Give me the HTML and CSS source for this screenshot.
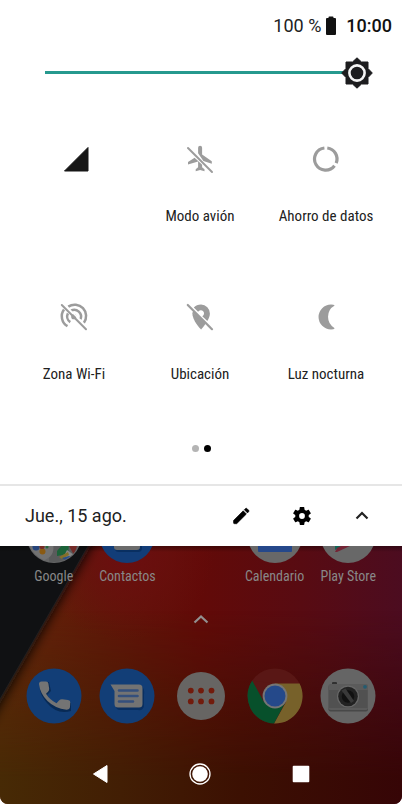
FILE: index.html
```html
<!DOCTYPE html>
<html lang="es">
<head>
<meta charset="utf-8">
<meta name="viewport" content="width=device-width, initial-scale=1">
<title>Ajustes rápidos</title>
<link rel="stylesheet" href="styles.css">
</head>
<body>
<div class="phone">
  <section class="panel">
    <header class="status">
      <span>100 %</span>
      <svg class="battery" viewBox="0 0 12 20" width="12" height="20" aria-hidden="true"><path fill="#111" d="M3.500 2V1.300Q3.500.5 4.300.5H7.700Q8.500.5 8.500 1.300V2H10Q11 2 11 3V18Q11 19 10 19H2Q1 19 1 18V3Q1 2 2 2Z"/></svg>
      <time class="clock">10:00</time>
    </header>

    <div class="brightness">
      <input class="slider" type="range" min="0" max="100" value="100" aria-label="Brillo">
      <svg class="sun" viewBox="0 0 32 32" width="32" height="32" aria-hidden="true">
        <path fill="#1d1d1f" stroke="#1d1d1f" stroke-width="1" stroke-linejoin="round" d="M16 .8 20.500 5H27V11.500L31.300 16 27 20.500V27H20.500L16 31.200 11.500 27H5V20.500L.7 16 5 11.500V5H11.500Z"/>
        <circle cx="16" cy="16" r="7.600" fill="#1d1d1f" stroke="#f5f5f5" stroke-width="2.600"/>
      </svg>
    </div>

    <div class="tiles">
      <button class="tile" aria-label="Datos móviles">
        <svg viewBox="0 0 30 30" width="30" height="30"><path fill="#161616" stroke="#161616" stroke-linejoin="round" d="M29 3.500V27H5.500Z"/></svg>
        <span></span>
      </button>
      <button class="tile off">
        <svg viewBox="0 0 30 30" width="30" height="30"><path fill="currentColor" d="M13.100 9.200V3.700A2 2 0 0 1 17.100 3.700V10.500L26.800 17.300V19.800L18.400 17Z"/><path fill="currentColor" d="M9.600 13.700 3 18V20.400L13.100 17.600V23.300L10.700 25.200V27.200L15.100 26 19.500 27.200V25.200L17.100 23.300V20.700Z"/><path fill="none" stroke="currentColor" stroke-width="2" stroke-linecap="round" d="M3 4 27 28"/></svg>
        <span>Modo avión</span>
      </button>
      <button class="tile off">
        <svg viewBox="0 0 30 30" width="30" height="30"><g fill="none" stroke="currentColor" stroke-width="3.200"><path d="M16.300 4A11.100 11.100 0 0 1 25.200 19.200"/><path d="M23.500 21.700A11.100 11.100 0 1 1 13.400 4"/></g></svg>
        <span>Ahorro de datos</span>
      </button>
      <button class="tile off">
        <svg viewBox="0 0 30 30" width="30" height="30"><g fill="none" stroke="currentColor" stroke-width="2.500"><path d="M9.300 4.600A11.400 11.400 0 0 1 24.800 20.900"/><path d="M5 7.600A11.400 11.400 0 0 0 8.500 24.200"/><path d="M12 8.700A6.800 6.800 0 0 1 21.500 17.300"/><path d="M8.900 11.400A6.800 6.800 0 0 0 11.300 20.100"/></g><circle cx="14.800" cy="14.700" r="2.600" fill="currentColor"/><path d="M4.500 1.500 29 26" stroke="#fff" stroke-width="1.400"/><path d="M2.800 3 27 27.200" stroke="currentColor" stroke-width="2" stroke-linecap="round"/></svg>
        <span>Zona Wi-Fi</span>
      </button>
      <button class="tile off">
        <svg viewBox="0 0 30 30" width="30" height="30"><path fill="currentColor" fill-rule="evenodd" d="M8.800 5.500C10.500 3.500 13.200 2.500 16 2.500A8.900 8.900 0 0 1 24.900 11.500C24.900 14 23.800 16.500 22.300 19L17.300 14.200A3.200 3.200 0 1 0 13.100 9.700Z"/><path fill="currentColor" d="M7.300 10.500 20.800 21.400C18.300 25 16 27.500 16 27.500S7 18.500 7.300 10.500Z"/><path fill="currentColor" d="M8.300 8.500 21.500 20.800 18 21 7.500 11Z"/><path d="M2.800 3 27 27.200" stroke="currentColor" stroke-width="2.200" stroke-linecap="round"/></svg>
        <span>Ubicación</span>
      </button>
      <button class="tile off">
        <svg viewBox="0 0 30 30" width="30" height="30"><path fill="currentColor" d="M20 2.500Q23 2.500 23.700 3.500A13 13 0 0 0 23.700 26.200Q23 27.400 20 27.400A12.450 12.450 0 0 1 20 2.500Z"/></svg>
        <span>Luz nocturna</span>
      </button>
    </div>

    <div class="dots"><i class="dot"></i><i class="dot current"></i></div>

    <footer class="bar">
      <span class="date">Jue., 15 ago.</span>
      <button class="action" aria-label="Editar"><svg viewBox="0 0 20 20" width="20" height="20"><path d="M1.500 14.500 11.200 4.800 14.400 8 4.700 17.700H2.500Q1.500 17.700 1.500 16.700Z M12.300 3.700 13.500 2.500Q14.200 1.900 14.900 2.500L16.700 4.300Q17.300 5 16.700 5.700L15.500 6.900Z" stroke="#000" stroke-width=".6" stroke-linejoin="round"/></svg></button>
      <button class="action" aria-label="Ajustes"><svg viewBox="2 2 20 20" width="18" height="18"><path d="M19.430 12.980c.04-.32.07-.64.07-.98s-.03-.66-.07-.98l2.110-1.650c.19-.15.24-.42.12-.64l-2-3.460c-.12-.22-.39-.3-.61-.22l-2.490 1c-.52-.4-1.080-.73-1.690-.98l-.38-2.650C14.460 2.180 14.250 2 14 2h-4c-.25 0-.46.18-.49.42l-.38 2.650c-.61.25-1.170.59-1.690.98l-2.490-1c-.23-.09-.49 0-.61.22l-2 3.460c-.13.22-.07.49.12.64l2.110 1.650c-.04.32-.07.65-.07.98s.03.66.07.98l-2.110 1.650c-.19.15-.24.42-.12.64l2 3.460c.12.22.39.3.61.22l2.490-1c.52.4 1.080.73 1.690.98l.38 2.650c.03.24.24.42.49.42h4c.25 0 .46-.18.49-.42l.38-2.650c.61-.25 1.170-.59 1.690-.98l2.490 1c.23.09.49 0 .61-.22l2-3.460c.12-.22.07-.49-.12-.64l-2.110-1.650zM12 15.200a3.200 3.200 0 1 1 0-6.400 3.200 3.200 0 0 1 0 6.400z"/></svg></button>
      <button class="action" aria-label="Contraer"><svg viewBox="0 0 18 18" width="18" height="18"><path fill="none" stroke="#222" stroke-width="2.200" d="M3.500 11.500 9 6 14.500 11.500"/></svg></button>
    </footer>
  </section>

  <main class="home">
    <svg class="wallpaper" viewBox="0 0 402 258" preserveAspectRatio="none" aria-hidden="true">
      <defs>
        <linearGradient id="base" x1="0" y1="0" x2="1" y2="0"><stop offset="0" stop-color="#64260a"/><stop offset=".25" stop-color="#601808"/><stop offset=".5" stop-color="#620a08"/><stop offset=".75" stop-color="#580b12"/><stop offset="1" stop-color="#4c0c20"/></linearGradient>
        <linearGradient id="low" x1="0" y1="0" x2="1" y2="0"><stop offset="0" stop-color="#472a05"/><stop offset=".3" stop-color="#421e04"/><stop offset=".6" stop-color="#3c1002"/><stop offset="1" stop-color="#360506"/></linearGradient>
        <linearGradient id="fade" x1="0" y1="0" x2="0" y2="1"><stop offset=".25" stop-color="#fff" stop-opacity="0"/><stop offset=".9" stop-color="#fff"/></linearGradient>
        <linearGradient id="shade" x1="0" y1="0" x2="0" y2="1"><stop offset="0" stop-opacity=".35"/><stop offset="1" stop-opacity="0"/></linearGradient>
        <radialGradient id="red" cx="125" cy="5" r="90" gradientUnits="userSpaceOnUse"><stop offset="0" stop-color="#6c0e10"/><stop offset="1" stop-color="#6c0e10" stop-opacity="0"/></radialGradient>
        <mask id="down"><rect width="402" height="258" fill="url(#fade)"/></mask>
        <filter id="soft" x="-30%" y="-30%" width="160%" height="160%"><feGaussianBlur stdDeviation="6"/></filter>
      </defs>
      <rect width="402" height="258" fill="url(#base)"/>
      <rect width="402" height="258" fill="url(#red)"/>
      <rect width="402" height="258" fill="url(#low)" mask="url(#down)"/>
      <path d="M-30-40H114L-30 210Z" fill="#0b0b0d" filter="url(#soft)"/>
      <path d="M0 0H88L0 153Z" fill="#101113"/>
      <path d="M88 0 0 153" stroke="#25272b" stroke-width=".6"/>
      <rect width="402" height="6" fill="url(#shade)"/>
    </svg>

    <div class="apps">
      <a class="app" href="#"><svg viewBox="0 38 56 17" width="56" height="17">
        <defs><clipPath id="disc"><circle cx="28" cy="27.500" r="26.500"/></clipPath></defs>
        <circle cx="28" cy="27.500" r="27.500" fill="#656667"/>
        <g clip-path="url(#disc)"><path fill="#666" d="M0 38H27V55H0Z"/><path fill="#5a5b5c" d="M23 38H56V55H23Z"/><circle cx="15" cy="40" r="12.500" fill="#727272"/><circle cx="10" cy="39" r="3.500" fill="#26447a"/><circle cx="16.500" cy="43.500" r="3" fill="#8a5a12"/><circle cx="16" cy="38.500" r="2.600" fill="#762c25"/><circle cx="21" cy="39" r="1.500" fill="#25643c"/><path fill="#1c6339" d="M31 48V43L37 36H43L42 46Z"/><path fill="#858585" d="m41 42 7 5-6 4-5-1Z"/><path fill="#856f28" d="m33 49 9-5 1 3-7 4Z"/><path fill="#742a27" d="M43 38H51L48 47Z"/><path fill="#274d8a" d="m36 50 7-2 3 1-5 4Z"/></g></svg><span>Google</span></a>
      <a class="app" href="#"><svg viewBox="0 38 56 17" width="56" height="17"><circle cx="28" cy="27.500" r="27.500" fill="#123d78"/><path fill="#092f61" d="M16 38H43V40Q43 44 39 44H20Q16 44 16 41Z"/><path fill="#6b6b6b" d="M15 38H41V39Q41 42 38 42H18Q15 42 15 39Z"/></svg><span>Contactos</span></a>
      <span></span>
      <a class="app" href="#"><svg viewBox="0 38 56 17" width="56" height="17"><circle cx="28" cy="27.500" r="27.500" fill="#686868"/><path fill="#25488a" d="M11 38H45V43Q45 44 44 44H12Q11 44 11 43Z"/></svg><span>Calendario</span></a>
      <a class="app" href="#"><svg viewBox="0 38 56 17" width="56" height="17"><circle cx="28" cy="27.500" r="27.500" fill="#686868"/><path fill="#126457" d="M15 38H22L15 42Z"/><path fill="#742435" d="M15 44 17 40 21 38H30L17 44Z"/></svg><span>Play Store</span></a>
    </div>

    <button class="drawer" aria-label="Abrir aplicaciones"><svg viewBox="0 0 16 10" width="16" height="10"><path fill="none" stroke="#929090" stroke-width="2.200" d="M1.500 8.500 8 2.500 14.500 8.500"/></svg></button>

    <div class="dock">
      <a class="app" href="#" aria-label="Teléfono"><svg viewBox="0 0 56 56" width="56" height="56"><circle cx="28" cy="28" r="27.500" fill="#123e77"/><path fill="#082a55" d="M15 16 23 14 25 23 21 27Q25 34 31 37L36 33 45 35V43Q31 47 21 35T15 16Z"/><path fill="#747474" d="M13 16Q13 13.500 15.500 13.500H20Q22 13.500 22.400 15.500L23.200 21Q23.200 22.600 22 23.700L20 25.700Q24 32 30.500 35.200L33 32.500Q34.500 31 36.300 31.200L42 32Q44.500 32.400 44.300 34.500L44 39Q43.600 41.700 40.500 41.700 29 40.500 21.500 33T13 16Z"/></svg></a>
      <a class="app" href="#" aria-label="Mensajes"><svg viewBox="0 0 56 56" width="56" height="56"><circle cx="28" cy="28" r="27.500" fill="#123e77"/><path fill="#092f61" d="M14 18H42Q46 20 45 27V38Q44 43 39 42H20Q16 41 17 36V23Z"/><path fill="#737373" d="M11.500 16.500H40Q43.500 16.500 43.500 20V36Q43.500 39.500 40 39.500H19Q15.500 39.500 15.500 36V23Z"/><path fill="none" stroke="#344f7c" stroke-width="2.600" stroke-linecap="round" d="M20 22.500H38.500M20 28H38.500M20 33.500H34"/></svg></a>
      <a class="app" href="#" aria-label="Aplicaciones"><svg viewBox="0 0 56 56" width="56" height="56"><circle cx="28" cy="28" r="24" fill="#676563"/><g fill="#721b0c"><circle cx="17.800" cy="22.600" r="2.900"/><circle cx="28" cy="22.600" r="2.900"/><circle cx="38.500" cy="22.600" r="2.900"/><circle cx="17.800" cy="33.400" r="2.900"/><circle cx="28" cy="33.400" r="2.900"/><circle cx="38.500" cy="33.400" r="2.900"/></g></svg></a>
      <a class="app" href="#" aria-label="Chrome"><svg viewBox="0 0 56 56" width="56" height="56"><circle cx="28" cy="28" r="27.500" fill="#591715"/><path fill="#77612a" d="M28 15.600H52.600A27.500 27.500 0 0 1 27 55.500L39 34Z"/><path fill="#07502b" d="M5.300 12.500A27.500 27.500 0 0 0 27 55.500L38 35 17 34Z"/><path fill="#591715" d="M5.300 12.500 17.300 34 28 28V15.600Z"/><circle cx="28" cy="28" r="12.400" fill="#757575"/><circle cx="28" cy="28" r="10.500" fill="#25498a"/></svg></a>
      <a class="app" href="#" aria-label="Cámara"><svg viewBox="0 0 56 56" width="56" height="56"><circle cx="28" cy="28" r="27.500" fill="#656565"/><rect x="12" y="14" width="5" height="3" rx="1" fill="#303030"/><rect x="8.500" y="17" width="39.500" height="26.500" rx="2" fill="#484848"/><rect x="8.500" y="16" width="39.500" height="26" rx="2" fill="#5b5b5b"/><path fill="#515151" d="M9 22H47.500V40H9Z"/><circle cx="28" cy="28.500" r="11" fill="#686868"/><circle cx="28" cy="28.500" r="9.800" fill="#222"/><circle cx="28" cy="28.500" r="6.200" fill="#111"/><path d="M21.500 22.500 25.500 20.500 34 33 31 35Z" fill="#393939"/><circle cx="45" cy="18.800" r="1.900" fill="#245b70"/></svg></a>
    </div>

    <nav class="nav">
      <button aria-label="Atrás"><svg viewBox="0 0 24 24" width="24" height="24"><path fill="#fff" stroke="#fff" stroke-linejoin="round" d="M19 3.500V20.500L5.500 12Z"/></svg></button>
      <button aria-label="Inicio"><svg viewBox="0 0 24 24" width="24" height="24"><circle cx="12" cy="12" r="10" fill="none" stroke="#fff" stroke-width="1.300"/><circle cx="12" cy="12" r="7.800" fill="#fff"/></svg></button>
      <button aria-label="Recientes"><svg viewBox="0 0 24 24" width="24" height="24"><rect x="3.700" y="3.700" width="16.600" height="16.600" rx="1" fill="#fff"/></svg></button>
    </nav>
  </main>
</div>
</body>
</html>
```
FILE: styles.css
```css
* { box-sizing: border-box; }

body {
  margin: 0;
  background: #fff;
  color: #212121;
  font-family: "Roboto", sans-serif;
}

button {
  margin: 0;
  padding: 0;
  border: 0;
  background: none;
  color: inherit;
  font: inherit;
}

svg { display: block; }

.phone {
  display: flex;
  flex-direction: column;
  min-height: 100vh;
}

.status {
  display: flex;
  justify-content: flex-end;
  align-items: center;
  gap: 4px;
  height: 40px;
  padding: 12px 10px 0 0;
  font-size: 18px;
  line-height: 28px;
  color: #222;
}

.clock {
  margin-left: 5px;
  font-weight: 500;
  color: #111;
}

.brightness {
  position: relative;
  height: 64px;
  padding: 16px 29px 16px 45px;
}

.slider {
  display: block;
  width: 100%;
  height: 32px;
  margin: 0;
  appearance: none;
  background: linear-gradient(#26998e, #26998e) left center / calc(100% - 16px) 3px no-repeat;
}

.slider::-webkit-slider-thumb {
  appearance: none;
  width: 32px;
  height: 32px;
  background: transparent;
}

.sun {
  position: absolute;
  top: 17px;
  right: 29px;
  pointer-events: none;
}

.tiles {
  display: grid;
  grid-template-columns: repeat(3, 1fr);
  padding: 40px 13px 0 11px;
}

.tile {
  display: flex;
  flex-direction: column;
  align-items: center;
  gap: 32px;
  height: 158px;
  font-family: "Roboto Condensed", "Roboto", sans-serif;
  font-size: 15px;
  line-height: 20px;
}

.tile:nth-child(n + 4) { height: 143px; }

.off svg { color: #9c9c9c; }

.dots {
  display: flex;
  justify-content: center;
  gap: 5px;
  padding-bottom: 32px;
}

.dot {
  width: 7px;
  height: 7px;
  border-radius: 50%;
  background: #b4b4b4;
}

.current { background: #000; }

.bar {
  display: flex;
  align-items: center;
  height: 62px;
  padding: 0 10px 0 25px;
  border-top: 2px solid #e6e6e6;
}

.date {
  flex: 1;
  font-size: 18px;
  line-height: 24px;
}

.action {
  display: grid;
  place-items: center;
  width: 60px;
  height: 48px;
}

.home {
  position: relative;
  flex: 1;
  display: flex;
  flex-direction: column;
  overflow: hidden;
  border-radius: 0 0 8px 8px;
}

.wallpaper {
  position: absolute;
  inset: 0;
  width: 100%;
  height: 100%;
}

.apps, .dock, .drawer, .nav { position: relative; }

.apps, .dock {
  display: grid;
  grid-template-columns: repeat(5, 1fr);
  padding: 0 17px;
}

.app {
  display: flex;
  flex-direction: column;
  align-items: center;
  gap: 3px;
  color: #888;
  font-family: "Roboto Condensed", "Roboto", sans-serif;
  font-size: 14px;
  line-height: 20px;
  text-decoration: none;
  white-space: nowrap;
}

.drawer {
  display: grid;
  place-items: center;
  height: 64px;
  margin-bottom: 18px;
  padding-top: 2px;
}

.nav {
  display: grid;
  grid-template-columns: repeat(3, 1fr);
  margin-top: auto;
  padding: 0 51px 18px 50px;
}

.nav button {
  display: grid;
  place-items: center;
}
```
